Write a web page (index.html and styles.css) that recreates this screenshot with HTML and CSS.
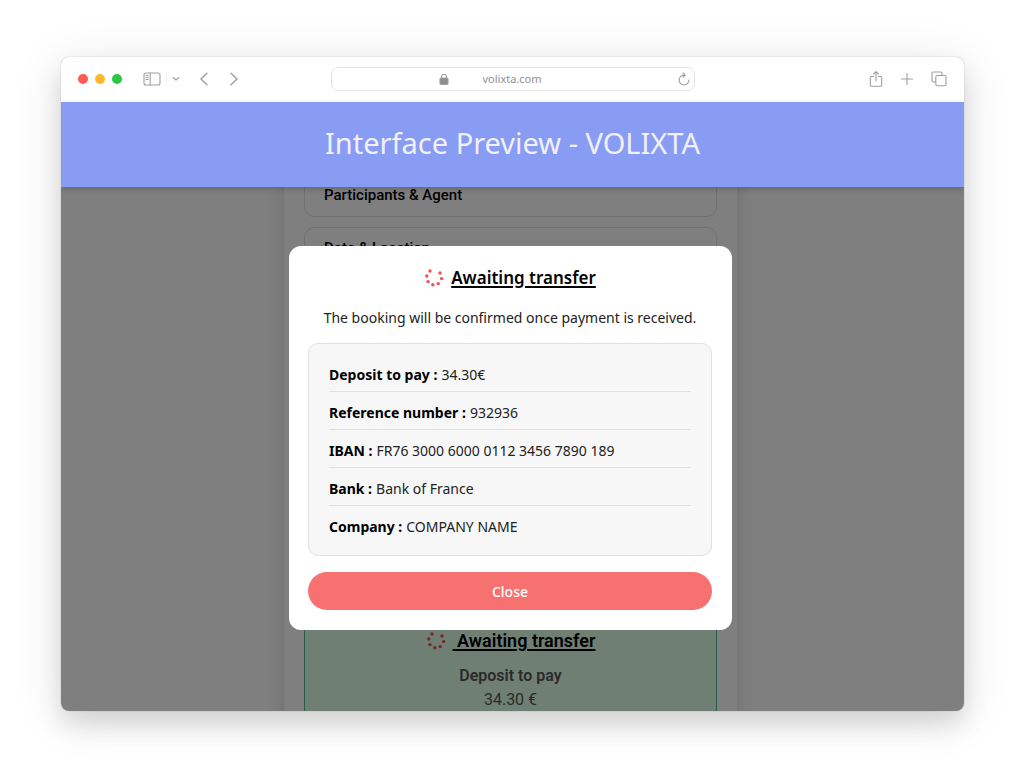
FILE: index.html
```html
<!DOCTYPE html>
<html lang="en">
<head>
<meta charset="utf-8">
<meta name="viewport" content="width=device-width, initial-scale=1">
<title>Interface Preview - VOLIXTA</title>
<link rel="stylesheet" href="styles.css">
</head>
<body>
<svg class="defs" width="0" height="0" aria-hidden="true">
  <symbol id="spinner" viewBox="0 0 20 20">
    <circle cx="6" cy="3" r="1.7"/><circle cx="16" cy="5" r="1.7"/><circle cx="17.6" cy="10.6" r="1.7"/><circle cx="14.2" cy="15.6" r="1.7"/><circle cx="8.8" cy="16.8" r="1.7"/><circle cx="4" cy="13.6" r="1.7"/><circle cx="2.8" cy="8" r="1.7"/>
  </symbol>
</svg>
<div class="window">
  <div class="toolbar">
    <div class="tools tools-left">
      <div class="lights"><span class="light red"></span><span class="light amber"></span><span class="light green"></span></div>
      <div class="sidebar-tools">
        <button class="tool" aria-label="Show sidebar"><svg width="18" height="14" viewBox="0 0 18 14"><rect x="1" y="1" width="16" height="12" rx="2"/><path d="M7.2 1v12M3 3.5h2.2M3 5.5h2.2M3 7.5h2.2"/></svg></button>
        <span class="divider"></span>
        <button class="tool" aria-label="Tab groups"><svg width="8" height="6" viewBox="0 0 8 6"><path d="M1.2 1.5L4 4.2l2.8-2.7"/></svg></button>
      </div>
      <div class="history">
        <button class="tool" aria-label="Back"><svg width="10" height="14" viewBox="0 0 10 14"><path class="bold" d="M8 1.2L2 7l6 5.800"/></svg></button>
        <button class="tool" aria-label="Forward"><svg width="10" height="14" viewBox="0 0 10 14"><path class="bold" d="M2 1.200L8 7l-6 5.800"/></svg></button>
      </div>
    </div>
    <div class="address">
      <svg class="lock" width="10" height="12" viewBox="0 0 10 12"><rect class="solid" x="1" y="5" width="8" height="6.500" rx="1"/><path d="M2.600 5.500V3.600a2.400 2.400 0 0 1 4.800 0v1.900"/></svg>
      <input class="url" type="text" value="volixta.com" aria-label="Address">
      <button class="tool" aria-label="Reload"><svg width="12" height="14" viewBox="0 0 12 14"><path d="M6.500 3.200A4.900 4.900 0 1 0 10.900 8M5 .8l2.300 2.400-2.200 2"/></svg></button>
    </div>
    <div class="tools tools-right">
      <button class="tool" aria-label="Share"><svg width="14" height="18" viewBox="0 0 14 18"><path d="M4.500 6.500H2.300q-1 0-1 1v7.700q0 1 1 1h9.400q1 0 1-1V7.500q0-1-1-1H9.500M7 11V2M4.500 4L7 1.600 9.500 4"/></svg></button>
      <button class="tool" aria-label="New tab"><svg width="12" height="12" viewBox="0 0 12 12"><path d="M6 .5v11M.5 6h11"/></svg></button>
      <button class="tool" aria-label="Show all tabs"><svg width="16" height="16" viewBox="0 0 16 16"><rect x="4.800" y="4.500" width="10.200" height="10.200" rx="1.500"/><path d="M4.500 11H2.400Q1 11 1 9.600V2.400Q1 1 2.400 1h7.200Q11 1 11 2.400v1.800"/></svg></button>
    </div>
  </div>
  <header class="banner"><h1 class="banner-title">Interface Preview - VOLIXTA</h1></header>
  <div class="page">
    <main class="sheet">
      <section class="card card-first"><h2 class="card-title">Participants &amp; Agent</h2></section>
      <section class="card card-tall"><h2 class="card-title">Date &amp; Location</h2></section>
      <section class="card status">
        <h2 class="status-title"><svg class="spinner" width="20" height="20"><use href="#spinner"/></svg><span class="underlined">&nbsp;Awaiting transfer</span></h2>
        <p class="status-label">Deposit to pay</p>
        <p class="status-value">34.30 €</p>
      </section>
    </main>
    <div class="overlay">
      <div class="modal" role="dialog" aria-modal="true" aria-labelledby="modal-title">
        <h2 class="modal-title" id="modal-title"><svg class="spinner" width="20" height="20"><use href="#spinner"/></svg><span class="underlined">Awaiting transfer</span></h2>
        <p class="modal-text">The booking will be confirmed once payment is received.</p>
        <dl class="details">
          <div class="row"><dt>Deposit to pay :</dt><dd>34.30€</dd></div>
          <div class="row"><dt>Reference number :</dt><dd>932936</dd></div>
          <div class="row"><dt>IBAN :</dt><dd>FR76 3000 6000 0112 3456 7890 189</dd></div>
          <div class="row"><dt>Bank :</dt><dd>Bank of France</dd></div>
          <div class="row"><dt>Company :</dt><dd>COMPANY NAME</dd></div>
        </dl>
        <button class="close">Close</button>
      </div>
    </div>
  </div>
</div>
</body>
</html>
```
FILE: styles.css
```css
* { box-sizing: border-box; }
body {
  margin: 0;
  height: 100vh;
  padding: 57px 60px 56px 61px;
  display: flex;
  background: #fff;
  color: #000;
  font-family: "Noto Sans", "Open Sans", sans-serif;
  overflow: hidden;
}
h1, h2, p, dl, dd { margin: 0; }
button { border: 0; padding: 0; background: none; font: inherit; cursor: pointer; }
.defs { position: absolute; }
.window {
  flex: 1;
  display: flex;
  flex-direction: column;
  min-width: 0;
  border-radius: 8px;
  overflow: hidden;
  background: #fff;
  box-shadow: 0 0 1px rgba(0, 0, 0, .4), 0 14px 24px rgba(0, 0, 0, .12), 0 6px 50px rgba(0, 0, 0, .1);
}

.toolbar {
  height: 45px;
  display: grid;
  grid-template-columns: 1fr 364px 1fr;
  align-items: center;
  padding: 0 17px 2px;
}
.tools, .lights, .sidebar-tools, .history { display: flex; align-items: center; }
.tools-right { justify-content: flex-end; gap: 18px; }
.lights { gap: 7px; margin-right: 21px; }
.light { width: 10px; height: 10px; border-radius: 50%; }
.red { background: #ff5b54; }
.amber { background: #ffb92c; }
.green { background: #29c840; }
.sidebar-tools { gap: 5px; margin-right: 19px; }
.divider { width: 1px; height: 14px; background: #f4f4f4; }
.history { gap: 20px; }
.tool { display: flex; }
.toolbar svg { fill: none; stroke: #9f9f9f; stroke-width: 1.1; stroke-linecap: round; stroke-linejoin: round; }
.toolbar .bold { stroke-width: 1.4; }
.toolbar .solid { fill: #8e8e8e; }
.address {
  height: 24px;
  display: flex;
  align-items: center;
  padding: 0 4px 0 107px;
  border: 1px solid #e4e4e4;
  border-radius: 7px;
}
.url {
  flex: 1;
  min-width: 0;
  border: 0;
  padding: 0 0 0 34px;
  background: none;
  color: #929292;
  font: 11px "Noto Sans", sans-serif;
}

.banner {
  position: relative;
  z-index: 1;
  height: 85px;
  display: flex;
  align-items: center;
  justify-content: center;
  padding-bottom: 4px;
  background: #899cf3;
  box-shadow: 0 2px 6px rgba(0, 0, 0, .2);
}
.banner-title { color: #f0f0f6; font-size: 29px; font-weight: 400; line-height: 40px; }

.page {
  flex: 1;
  min-height: 0;
  position: relative;
  padding-right: 4px;
  overflow: hidden;
  background: #fefefe;
}
.sheet {
  width: 453px;
  margin: -30px auto 0;
  padding: 20px;
  display: flex;
  flex-direction: column;
  gap: 10px;
  background: #fff;
  box-shadow: 0 0 16px rgba(0, 0, 0, .14);
  font-family: Roboto, sans-serif;
}
.card { border: 1px solid #e2e2e2; border-radius: 10px; padding: 10px 19px; }
.card-first { height: 40px; padding-top: 7px; }
.card-tall { height: 381px; }
.card-title { font-size: 15px; font-weight: 500; line-height: 20px; }
.status { height: 200px; border-color: #50b894; background: #dfffe7; text-align: center; color: #555; }
.status-title, .modal-title { display: flex; justify-content: center; align-items: center; color: #000; line-height: 24px; }
.status-title { gap: 7px; font-size: 18px; font-weight: 600; }
.underlined { text-decoration: underline; text-decoration-thickness: 2px; text-underline-offset: 2px; }
.spinner { fill: #f34d4f; }
.status-label { margin-top: 11px; font-size: 16px; font-weight: 600; line-height: 24px; }
.status-value { font-size: 16px; line-height: 24px; }

.overlay {
  position: absolute;
  inset: 0;
  display: flex;
  justify-content: center;
  align-items: flex-start;
  padding: 59px 4px 0 0;
  background: rgba(0, 0, 0, .5);
}
.modal { width: 443px; padding: 19px 20px 20px 19px; border-radius: 12px; background: #fff; }
.modal-title { gap: 7px; font-size: 17px; font-weight: 600; line-height: 26px; }
.modal-text { margin: 15px 0 13px; text-align: center; color: #222; font-size: 14px; line-height: 24px; }
.details { padding: 10px 20px 12px; border: 1px solid #e0e0e0; border-radius: 10px; background: #f7f7f7; font-size: 14px; }
.row { display: flex; gap: 4px; padding: 10px 0 6px; line-height: 21px; border-bottom: 1px solid #e0e0e0; }
.row:last-child { border-bottom: 0; }
dt { font-weight: 700; }
dd { color: #222; }
.close { width: 100%; height: 38px; margin-top: 16px; border-radius: 19px; background: #f87171; color: #fff; font-size: 14px; font-weight: 500; }
```
